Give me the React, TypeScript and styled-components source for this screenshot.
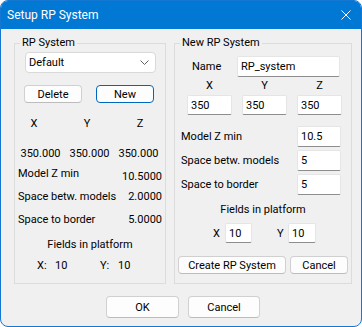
import styled, { createGlobalStyle } from 'styled-components'

const GlobalStyle = createGlobalStyle`
  html, body {
    margin: 0;
    padding: 0;
    background: #ffffff;
  }
  body {
    font-family: Roboto, "Liberation Sans", sans-serif;
    font-size: 11px;
    color: #000;
  }
`

const App = () => {
  return (
    <>
      <GlobalStyle />
      <Window>
        <TitleBar>
          <span>Setup RP System</span>
          <svg width="10" height="10" viewBox="0 0 10 10">
            <path d="M0.5 0.5 L9.5 9.5 M9.5 0.5 L0.5 9.5" stroke="#fff" strokeWidth="1" />
          </svg>
        </TitleBar>
        <Body>
          <Groups>
            <Group $w={152}>
              <Legend>RP System</Legend>
              <Select>
                <span>Default</span>
                <svg width="9" height="5" viewBox="0 0 9 5">
                  <path d="M0.5 0.5 L4.5 4.5 L8.5 0.5" stroke="#606060" strokeWidth="1" fill="none" />
                </svg>
              </Select>
              <ButtonRow $mt={12} $pl={9} $gap={14}>
                <Button $w={58} $h={18}>Delete</Button>
                <Button $w={58} $h={18} $focus>New</Button>
              </ButtonRow>
              <Triple $mt={11} $h={20} $col={38} $gap={15} $pl={0}>
                <span>X</span>
                <span>Y</span>
                <span>Z</span>
              </Triple>
              <Triple $mt={10} $h={20} $col={45} $gap={4} $pl={3}>
                <span>350.000</span>
                <span>350.000</span>
                <span>350.000</span>
              </Triple>
              <InfoRow $mt={0}>
                <span>Model Z min</span>
                <Value $dy={3}>10.5000</Value>
              </InfoRow>
              <InfoRow $mt={3}>
                <span>Space betw. models</span>
                <Value $dy={0}>2.0000</Value>
              </InfoRow>
              <InfoRow $mt={3}>
                <span>Space to border</span>
                <Value $dy={0}>5.0000</Value>
              </InfoRow>
              <Caption $mt={5} $h={20}>Fields in platform</Caption>
              <FieldsInfo>
                <Tag $w={18}>X:</Tag>
                <Tag $w={45}>10</Tag>
                <Tag $w={18}>Y:</Tag>
                <Tag $w={20}>10</Tag>
              </FieldsInfo>
            </Group>

            <Group $w={178}>
              <Legend>New RP System</Legend>
              <NameRow>
                <Tag $w={45}>Name</Tag>
                <Field $w={103} $h={21} defaultValue="RP_system" />
              </NameRow>
              <Triple $mt={0} $h={18} $col={45} $gap={10} $pl={12}>
                <span>X</span>
                <span>Y</span>
                <span>Z</span>
              </Triple>
              <Triple $mt={0} $h={20} $col={45} $gap={10} $pl={12}>
                <Field $w={45} $h={20} defaultValue="350" />
                <Field $w={45} $h={20} defaultValue="350" />
                <Field $w={45} $h={20} defaultValue="350" />
              </Triple>
              <ParamRow $mt={11}>
                <span>Model Z min</span>
                <Field $w={44} $h={21} defaultValue="10.5" />
              </ParamRow>
              <ParamRow $mt={3}>
                <span>Space betw. models</span>
                <Field $w={44} $h={21} defaultValue="5" />
              </ParamRow>
              <ParamRow $mt={3}>
                <span>Space to border</span>
                <Field $w={44} $h={21} defaultValue="5" />
              </ParamRow>
              <Caption $mt={6} $h={18}>Fields in platform</Caption>
              <PlatformRow>
                <Tag $w={12}>X</Tag>
                <Field $w={27} $h={20} defaultValue="10" />
                <Tag $w={25} />
                <Tag $w={11}>Y</Tag>
                <Field $w={28} $h={20} defaultValue="10" />
              </PlatformRow>
              <ButtonRow $mt={13} $pl={3} $gap={4}>
                <Button $w={108} $h={18}>Create RP System</Button>
                <Button $w={58} $h={18}>Cancel</Button>
              </ButtonRow>
            </Group>
          </Groups>
          <Footer>
            <Button $w={73} $h={22}>OK</Button>
            <Button $w={72} $h={22}>Cancel</Button>
          </Footer>
        </Body>
      </Window>
    </>
  )
}

const Window = styled.div`
  width: 362px;
  height: 327px;
  box-sizing: border-box;
  border: 1px solid #1477d2;
  border-radius: 8px;
  overflow: hidden;
  background: #f0f0f0;
  display: flex;
  flex-direction: column;
`

const TitleBar = styled.div`
  height: 28px;
  flex-shrink: 0;
  background: #0078d4;
  color: #ffffff;
  font-size: 12px;
  display: flex;
  align-items: center;
  justify-content: space-between;
  padding: 0 10px 0 6px;
`

const Body = styled.div`
  display: flex;
  flex-direction: column;
  padding: 7px 9px 0 13px;
`

const Groups = styled.div`
  display: flex;
  gap: 8px;
`

const Group = styled.fieldset<{ $w: number }>`
  margin: 0;
  padding: 0;
  min-width: 0;
  width: ${p => p.$w}px;
  height: 248px;
  box-sizing: border-box;
  border: 1px solid #dcdcdc;
  display: flex;
  flex-direction: column;
`

const Legend = styled.legend`
  margin-left: 5px;
  padding: 0 2px;
  line-height: 14px;
`

const Select = styled.div`
  width: 131px;
  height: 21px;
  box-sizing: border-box;
  margin: 2px 0 0 10px;
  padding: 0 6px 0 3px;
  background: #ffffff;
  border: 1px solid #d9d9d9;
  border-radius: 4px;
  display: flex;
  align-items: center;
  justify-content: space-between;
`

const ButtonRow = styled.div<{ $mt: number; $pl: number; $gap: number }>`
  display: flex;
  margin-top: ${p => p.$mt}px;
  padding-left: ${p => p.$pl}px;
  gap: ${p => p.$gap}px;
`

const Button = styled.button<{ $w: number; $h: number; $focus?: boolean }>`
  width: ${p => p.$w}px;
  height: ${p => p.$h}px;
  box-sizing: border-box;
  padding: 0;
  background: #fdfdfd;
  border: 1px solid ${p => (p.$focus ? '#0067c0' : '#d0d0d0')};
  border-bottom-color: ${p => (p.$focus ? '#0067c0' : '#bcbcbc')};
  border-radius: 4px;
  font-family: inherit;
  font-size: 11px;
  color: #000;
`

const Triple = styled.div<{ $mt: number; $h: number; $col: number; $gap: number; $pl: number }>`
  display: grid;
  grid-template-columns: repeat(3, ${p => p.$col}px);
  column-gap: ${p => p.$gap}px;
  align-items: center;
  justify-items: center;
  margin-top: ${p => p.$mt}px;
  padding-left: ${p => p.$pl}px;
  height: ${p => p.$h}px;
  line-height: ${p => p.$h}px;
`

const InfoRow = styled.div<{ $mt: number }>`
  display: flex;
  justify-content: space-between;
  align-items: flex-start;
  height: 20px;
  line-height: 20px;
  margin-top: ${p => p.$mt}px;
  padding: 0 3px;
`

const Value = styled.span<{ $dy: number }>`
  margin-top: ${p => p.$dy}px;
`

const Caption = styled.div<{ $mt: number; $h: number }>`
  margin-top: ${p => p.$mt}px;
  height: ${p => p.$h}px;
  line-height: ${p => p.$h}px;
  text-align: center;
`

const FieldsInfo = styled.div`
  display: flex;
  margin-top: 1px;
  height: 20px;
  line-height: 20px;
  padding-left: 22px;
`

const Tag = styled.span<{ $w: number }>`
  display: inline-block;
  width: ${p => p.$w}px;
  flex-shrink: 0;
`

const NameRow = styled.div`
  display: flex;
  align-items: center;
  margin-top: 6px;
  height: 21px;
  padding-left: 17px;
`

const Field = styled.input<{ $w: number; $h: number }>`
  width: ${p => p.$w}px;
  height: ${p => p.$h}px;
  box-sizing: border-box;
  margin: 0;
  padding: 0 3px;
  background: #ffffff;
  border: 1px solid #e5e5e5;
  border-bottom-color: #8d8d8d;
  border-radius: 2px;
  font-family: inherit;
  font-size: 11px;
  color: #000;
  outline: none;
`

const ParamRow = styled.div<{ $mt: number }>`
  display: flex;
  align-items: center;
  justify-content: space-between;
  margin-top: ${p => p.$mt}px;
  height: 21px;
  padding: 0 10px 0 6px;
`

const PlatformRow = styled.div`
  display: flex;
  align-items: center;
  margin-top: 4px;
  height: 20px;
  padding-left: 38px;
`

const Footer = styled.div`
  display: flex;
  justify-content: center;
  gap: 9px;
  margin-top: 12px;
`

export default App
